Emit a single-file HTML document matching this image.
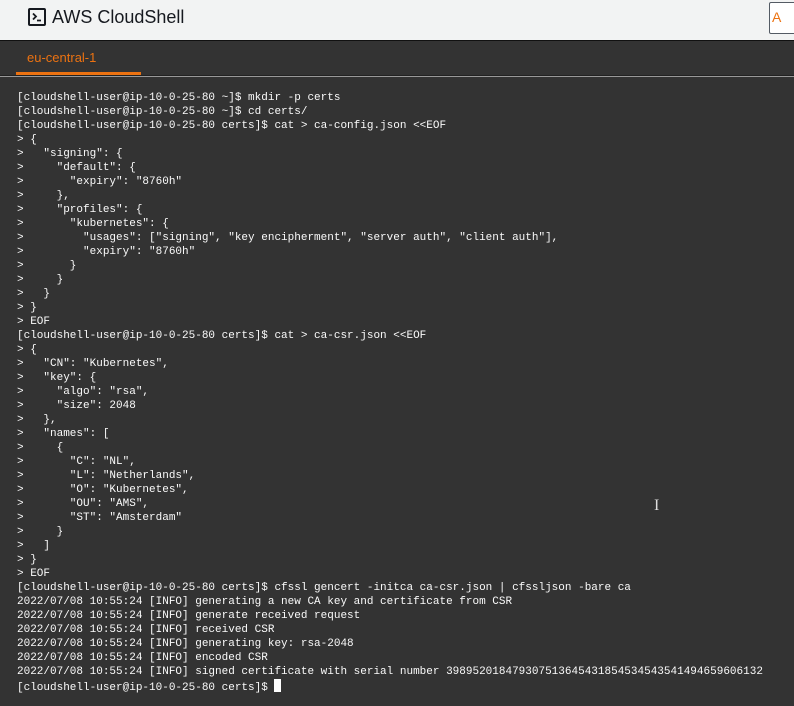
<!DOCTYPE html>
<html><head><meta charset="utf-8"><style>
body{margin:0;width:794px;height:706px;overflow:hidden;background:#333;font-family:"Liberation Sans",sans-serif}
.hdr{position:absolute;left:0;top:0;width:794px;height:40px;background:#f2f3f3;border-bottom:1px solid #111}
.title{position:absolute;left:52px;top:7px;font-size:18px;color:#16191f}
.ico{position:absolute;left:28px;top:8px;width:14px;height:14px;border:2px solid #16191f;border-radius:2px}
.box{position:absolute;left:769px;top:2px;width:40px;height:30px;background:#fff;border:1px solid #545b64;border-radius:2px}
.tab{position:absolute;left:27px;top:50px;font-size:13px;color:#ec7211}
.ul{position:absolute;left:16px;top:72px;width:125px;height:3px;background:#ec7211}
.sep{position:absolute;left:0;top:75px;width:794px;height:1px;background:#999;border-top:1px solid #222}
pre{position:absolute;left:17px;top:91px;margin:0;font-family:"Liberation Mono",monospace;font-size:11px;line-height:14px;color:#fafafa}
.cur{display:inline-block;width:7px;height:13px;background:#fff;vertical-align:-2px}
</style></head><body>
<div class="hdr"><div class="ico"><svg width="14" height="14" viewBox="0 0 14 14" style="position:absolute;left:0;top:0"><path d="M3 3.5L6 6.5L3 9.5M7 10.5H11" stroke="#16191f" stroke-width="1.8" fill="none"/></svg></div><div class="title">AWS CloudShell</div><div class="box"><span style="position:absolute;left:2px;top:6px;color:#ec7211;font-size:14px">A</span></div></div>
<div class="tab">eu-central-1</div><div class="ul"></div><div class="sep"></div>
<pre>[cloudshell-user@ip-10-0-25-80 ~]$ mkdir -p certs
[cloudshell-user@ip-10-0-25-80 ~]$ cd certs/
[cloudshell-user@ip-10-0-25-80 certs]$ cat &gt; ca-config.json &lt;&lt;EOF
&gt; {
&gt;   "signing": {
&gt;     "default": {
&gt;       "expiry": "8760h"
&gt;     },
&gt;     "profiles": {
&gt;       "kubernetes": {
&gt;         "usages": ["signing", "key encipherment", "server auth", "client auth"],
&gt;         "expiry": "8760h"
&gt;       }
&gt;     }
&gt;   }
&gt; }
&gt; EOF
[cloudshell-user@ip-10-0-25-80 certs]$ cat &gt; ca-csr.json &lt;&lt;EOF
&gt; {
&gt;   "CN": "Kubernetes",
&gt;   "key": {
&gt;     "algo": "rsa",
&gt;     "size": 2048
&gt;   },
&gt;   "names": [
&gt;     {
&gt;       "C": "NL",
&gt;       "L": "Netherlands",
&gt;       "O": "Kubernetes",
&gt;       "OU": "AMS",
&gt;       "ST": "Amsterdam"
&gt;     }
&gt;   ]
&gt; }
&gt; EOF
[cloudshell-user@ip-10-0-25-80 certs]$ cfssl gencert -initca ca-csr.json | cfssljson -bare ca
2022/07/08 10:55:24 [INFO] generating a new CA key and certificate from CSR
2022/07/08 10:55:24 [INFO] generate received request
2022/07/08 10:55:24 [INFO] received CSR
2022/07/08 10:55:24 [INFO] generating key: rsa-2048
2022/07/08 10:55:24 [INFO] encoded CSR
2022/07/08 10:55:24 [INFO] signed certificate with serial number 398952018479307513645431854534543541494659606132
[cloudshell-user@ip-10-0-25-80 certs]$ <span class="cur"></span></pre>
<div style="position:absolute;left:654px;top:497px;color:#ddd;font-family:'Liberation Serif',serif;font-size:16px">I</div>
</body></html>
